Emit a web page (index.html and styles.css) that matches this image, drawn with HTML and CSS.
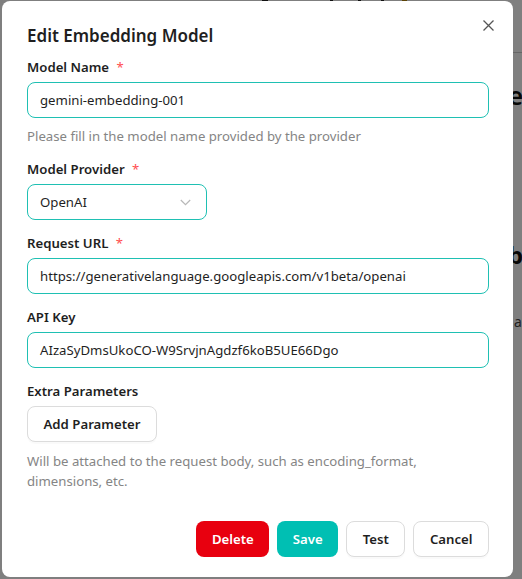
FILE: index.html
```html
<!DOCTYPE html>
<html lang="en">
<head>
<meta charset="utf-8">
<title>Edit Embedding Model</title>
<link rel="stylesheet" href="styles.css">
</head>
<body>
<div class="page">
  <div class="frag f1"></div>
  <div class="frag f2"></div>
  <div class="frag f3"></div>
  <div class="frag f4"></div>
  <div class="frag f5"></div>
  <div class="bg-glyph bg-e">e</div>
  <div class="bg-glyph bg-b">b</div>
  <div class="bg-glyph bg-a">a</div>
  <div class="bg-rule"></div>
</div>
<div class="overlay"></div>
<div class="dialog">
  <div class="header">
    <h2 class="title">Edit Embedding Model</h2>
    <button class="close" aria-label="Close">
      <svg width="11" height="11" viewBox="0 0 11 11"><path d="M0.5 0.5 L10.5 10.5 M10.5 0.5 L0.5 10.5" stroke="#555" stroke-width="1.3" fill="none"/></svg>
    </button>
  </div>
  <div class="field field-first">
    <label class="label">Model Name <span class="req">*</span></label>
    <div class="input">gemini-embedding-001</div>
    <div class="help">Please fill in the model name provided by the provider</div>
  </div>
  <div class="field">
    <label class="label">Model Provider <span class="req">*</span></label>
    <div class="input select">OpenAI
      <svg class="chev" width="11" height="7" viewBox="0 0 11 7"><path d="M0.8 1 L5.5 5.7 L10.2 1" stroke="#b8b8b8" stroke-width="1.2" fill="none"/></svg>
    </div>
  </div>
  <div class="field">
    <label class="label">Request URL <span class="req">*</span></label>
    <div class="input">https://generativelanguage.googleapis.com/v1beta/openai</div>
  </div>
  <div class="field">
    <label class="label">API Key</label>
    <div class="input">AIzaSyDmsUkoCO-W9SrvjnAgdzf6koB5UE66Dgo</div>
  </div>
  <div class="field">
    <label class="label">Extra Parameters</label>
    <button class="btn btn-default add">Add Parameter</button>
    <div class="help help2">Will be attached to the request body, such as encoding_format, dimensions, etc.</div>
  </div>
  <div class="footer">
    <button class="btn btn-danger">Delete</button>
    <button class="btn btn-primary">Save</button>
    <button class="btn btn-default">Test</button>
    <button class="btn btn-default">Cancel</button>
  </div>
</div>
</body>
</html>
```

FILE: styles.css
```css
html, body {
  margin: 0;
  padding: 0;
  width: 522px;
  height: 579px;
  overflow: hidden;
  font-family: "Noto Sans", "Open Sans", sans-serif;
  background: #ffffff;
}
.page {
  position: absolute;
  inset: 0;
  background: #ffffff;
}
.frag { position: absolute; top: 0; height: 3px; background: #222; }
.f1 { left: 262px; width: 6px; }
.f2 { left: 330px; width: 3px; }
.f3 { left: 358px; width: 3px; }
.f4 { left: 381px; width: 3px; }
.f5 { left: 402px; width: 5px; background: #b8860b; }
.bg-glyph {
  position: absolute;
  color: #111;
}
.bg-e { top: 80px; left: 508px; font-size: 26px; font-weight: 600; line-height: 30px; }
.bg-b { top: 240px; left: 508px; font-size: 24px; font-weight: 700; line-height: 30px; }
.bg-a { top: 312px; left: 514px; font-size: 14px; color: #444; line-height: 20px; }
.bg-rule { position: absolute; top: 52px; left: 513px; width: 9px; height: 1px; background: #ccc; }
.overlay {
  position: absolute;
  inset: 0;
  background: rgba(0, 0, 0, 0.5);
}
.dialog {
  position: absolute;
  left: 2px;
  top: 1px;
  width: 511px;
  height: 576px;
  box-sizing: border-box;
  background: #ffffff;
  border-radius: 8px;
  padding: 22px 24px 0 25px;
  display: flex;
  flex-direction: column;
}
.header {
  display: flex;
  justify-content: space-between;
  align-items: flex-start;
  height: 26px;
}
.title {
  margin: 0;
  font-size: 17px;
  font-weight: 600;
  color: #1f1f1f;
  line-height: 26px;
}
.close {
  border: none;
  background: none;
  padding: 0;
  margin-top: -3px;
  margin-right: -5px;
  width: 11px;
  height: 11px;
  display: flex;
  align-items: center;
  justify-content: center;
}
.field {
  display: flex;
  flex-direction: column;
  margin-top: 13px;
}
.field-first { margin-top: 8px; }
.label {
  font-size: 13.2px;
  font-weight: 600;
  color: #1f1f1f;
  line-height: 20px;
  margin-bottom: 5px;
}
.req { color: #ff4d4f; margin-left: 4px; font-weight: 400; }
.input {
  height: 36px;
  box-sizing: border-box;
  border: 1px solid #1fc0b3;
  border-radius: 8px;
  padding: 0 12px;
  display: flex;
  align-items: center;
  font-size: 13.2px;
  color: #1f1f1f;
}
.select {
  width: 180px;
  justify-content: space-between;
  padding-right: 15px;
}
.help {
  font-size: 13.2px;
  color: #858585;
  line-height: 20px;
  margin-top: 8px;
}
.help2 { margin-top: 9px; }
.btn {
  height: 36px;
  box-sizing: border-box;
  border-radius: 8px;
  font-family: inherit;
  font-size: 13.2px;
  font-weight: 600;
  padding: 0 15.5px;
  cursor: pointer;
}
.btn-default {
  background: #fff;
  border: 1px solid #dcdcdc;
  color: #1f1f1f;
  box-shadow: 0 2px 0 rgba(0,0,0,0.02);
}
.add { align-self: flex-start; }
.btn-danger { background: #e8000f; border: none; color: #fff; }
.btn-primary { background: #00bfb3; border: none; color: #fff; }
.footer {
  margin-top: auto;
  margin-bottom: 20px;
  display: flex;
  justify-content: flex-end;
  gap: 8px;
}
```
